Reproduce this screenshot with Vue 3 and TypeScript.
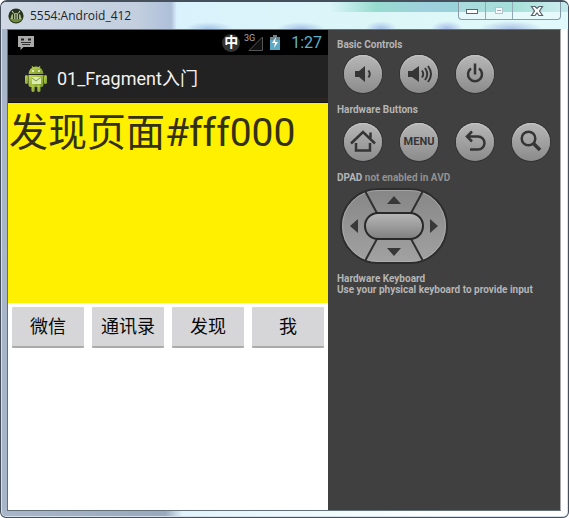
<script setup lang="ts">
import { ref } from 'vue'

interface Tab {
  label: string
  color: string
}

const tabs: Tab[] = [
  { label: '微信', color: '#ff0000' },
  { label: '通讯录', color: '#00ff00' },
  { label: '发现', color: '#fff000' },
  { label: '我', color: '#0000ff' },
]
const current = ref<number>(2)
</script>

<template>
  <div class="window">
    <header class="titlebar">
      <svg class="app-icon" viewBox="0 0 16 16" aria-hidden="true">
        <circle cx="8" cy="8" r="7.6" fill="#28351c" />
        <path d="M1.500 10h13a7 7 0 0 1-13 0z" fill="#6d8a3d" />
        <path d="M3 9a5 4 0 0 1 10 0v2H3z" fill="#a9b78f" />
        <path d="M4 3l1.500 2M12 3l-1.500 2" stroke="#dce3cf" />
        <path d="M5.500 6v5M8 6v5M10.500 6v5" stroke="#28351c" />
      </svg>
      <h1 class="caption">5554:Android_412</h1>
      <div class="window-buttons">
        <button type="button" class="win-btn" aria-label="Minimize">
          <svg width="14" height="8" viewBox="0 0 14 8"><rect x="1.500" y="2.500" width="11" height="4" fill="#fff" stroke="#5b6672" /></svg>
        </button>
        <button type="button" class="win-btn" aria-label="Maximize" disabled>
          <svg width="10" height="8" viewBox="0 0 10 8"><rect x="1.500" y=".5" width="7" height="6" fill="#f4fafc" stroke="#b4c3cb" /><path d="M3 3.500h4" stroke="#9cabb5" /></svg>
        </button>
        <button type="button" class="win-btn close" aria-label="Close">
          <svg width="14" height="12" viewBox="0 0 14 12"><path d="M1.500 1.500h3.500l2 2 2-2h3.500L9.500 6l3 4.500H9l-2-2.500-2 2.500H1.500l3-4.500z" fill="#fff" stroke="#56616d" stroke-width="1.200" /></svg>
        </button>
      </div>
    </header>

    <main class="client">
      <section class="phone">
        <div class="status">
          <svg class="message" width="18" height="16" viewBox="0 0 18 16" aria-hidden="true">
            <path d="M1 1h16v11H6.500L3.500 15v-3H1z" fill="#aaa" />
            <path d="M4 4.500h3M11 4.500h3" stroke="#222" stroke-width="2" />
            <path d="M4 7.500h10M5 9.500h8" stroke="#333" stroke-width="1.200" />
          </svg>
          <span class="ime">中</span>
          <svg class="signal" width="20" height="18" viewBox="0 0 20 18" aria-hidden="true">
            <path d="M5 16.500L18.500 3v13.500z" fill="#111" stroke="#555" />
            <text x="0" y="7" class="network">3G</text>
          </svg>
          <svg class="battery" width="10" height="15" viewBox="0 0 10 15" aria-hidden="true">
            <path d="M3 0h4v2h3v13H0V2h3z" fill="#6d858d" />
            <path d="M0 5h10v10H0z" fill="#5ba9c5" />
            <path d="M6 2L2 8h3l-1 5 4-6H5z" fill="#fff" />
          </svg>
          <time class="clock">1:27</time>
        </div>

        <div class="actionbar">
          <svg width="24" height="28" viewBox="0 0 24 28" aria-hidden="true">
            <defs>
              <linearGradient id="droid" x2="1" y2="1"><stop stop-color="#c5dc54" /><stop offset="1" stop-color="#76962a" /></linearGradient>
            </defs>
            <g fill="url(#droid)">
              <path d="M4.500 9a7.500 7.500 0 0 1 15 0z" />
              <path d="M4.500 10h15v10a2 2 0 0 1-2 2h-11a2 2 0 0 1-2-2z" />
              <rect x="1" y="10" width="3" height="9" rx="1.500" />
              <rect x="20" y="10" width="3" height="9" rx="1.500" />
              <rect x="7.500" y="20" width="3.200" height="7" rx="1.500" />
              <rect x="13.300" y="20" width="3.200" height="7" rx="1.500" />
            </g>
            <path d="M8 1l1.500 3M16 1l-1.500 3" stroke="#a9c54b" />
            <circle cx="9" cy="6" r=".9" fill="#fff" /><circle cx="15" cy="6" r=".9" fill="#fff" />
            <path d="M8 12h8l1 2v5H8z" fill="#dcebb0" />
            <path d="M8 13l4 3 4-3" fill="none" stroke="#7e993b" />
          </svg>
          <h2>01_Fragment入门</h2>
        </div>

        <div class="fragment" :style="{ backgroundColor: tabs[current].color }">{{ tabs[current].label }}页面{{ tabs[current].color }}</div>

        <nav class="tabs">
          <button v-for="(tab, i) in tabs" :key="tab.label" type="button" class="tab" @click="current = i">{{ tab.label }}</button>
        </nav>
      </section>

      <aside class="controls">
        <h3>Basic Controls</h3>
        <div class="keys basic">
          <button type="button" class="key" aria-label="Volume down">
            <svg viewBox="0 0 38 38"><path d="M11 16h4l6-5v16l-6-5h-4z" fill="#353535" /><path d="M24.500 15.500q2.500 3.500 0 7" class="line" /></svg>
          </button>
          <button type="button" class="key" aria-label="Volume up">
            <svg viewBox="0 0 38 38"><path d="M8 16h4l7-5v16l-7-5H8z" fill="#353535" /><path d="M22 15.500q2.500 3.500 0 7M25 13q4.500 6 0 12M28 11q6 8 0 16" class="line" /></svg>
          </button>
          <button type="button" class="key" aria-label="Power">
            <svg viewBox="0 0 38 38"><path d="M15 13.500a7 7 0 1 0 8 0M19 8.500v11" class="line thick" /></svg>
          </button>
        </div>

        <h3>Hardware Buttons</h3>
        <div class="keys hardware">
          <button type="button" class="key" aria-label="Home">
            <svg viewBox="0 0 38 38"><path d="M7 20.500L19 9l12 11.500M26.500 15V9.500M12 20v7.500h14V20" class="line thick" /></svg>
          </button>
          <button type="button" class="key">MENU</button>
          <button type="button" class="key" aria-label="Back">
            <svg viewBox="0 0 38 38"><path d="M16 8.500l-5 5 5 5M11 13.500h11a6.500 6.500 0 0 1 0 13h-8" class="line thick" /></svg>
          </button>
          <button type="button" class="key" aria-label="Search">
            <svg viewBox="0 0 38 38"><circle cx="16.500" cy="15.500" r="6.800" class="line thick" /><path d="M21.500 20.500l6.500 6.500" class="line heavy" /></svg>
          </button>
        </div>

        <h3>DPAD <span class="note">not enabled in AVD</span></h3>
        <svg class="dpad" width="108" height="76" viewBox="0 0 108 76" role="img" aria-label="Directional pad">
          <defs>
            <linearGradient id="pad" x2="0" y2="1"><stop stop-color="#868686" /><stop offset="1" stop-color="#a2a2a2" /></linearGradient>
            <linearGradient id="center" x2="0" y2="1"><stop stop-color="#b8b8b8" /><stop offset="1" stop-color="#808080" /></linearGradient>
          </defs>
          <rect x="1" y="1" width="106" height="74" rx="37" fill="url(#pad)" stroke="#2d2d2d" stroke-width="2" />
          <rect x="2.500" y="2.500" width="103" height="71" rx="35.500" fill="none" stroke="#b0b0b0" opacity=".7" />
          <path d="M25 3l13 24M83 3L70 27M25 73l13-24M83 73L70 49" stroke="#303030" stroke-width="2" />
          <rect x="25" y="25" width="58" height="26" rx="13" fill="url(#center)" stroke="#292929" stroke-width="2" />
          <path d="M47 16l7-8 7 8zM47 60l7 8 7-8zM18 31l-8 7 8 7zM90 31l8 7-8 7z" fill="#383838" />
        </svg>

        <h3 class="keyboard">Hardware Keyboard<br />Use your physical keyboard to provide input</h3>
      </aside>
    </main>
  </div>
</template>

<style>
body {
  margin: 0;
}
</style>

<style scoped>
.window {
  box-sizing: border-box;
  display: flex;
  flex-direction: column;
  min-height: 100vh;
  padding: 0 7px 6px 6px;
  border: 1px solid #45505c;
  border-top-width: 2px;
  border-radius: 7px 7px 6px 6px;
  background: linear-gradient(90deg, #a9b6c9 0, #9ba9be 29%, #e2f3fb 32%, #f2fbfb 60%, #fff 80%, #fff 100%);
  box-shadow: inset 0 0 0 1px #d5e0eb;
  font-family: Roboto, "Noto Sans CJK SC", sans-serif;
}

h1,
h2,
h3 {
  margin: 0;
  font-weight: 400;
}

.titlebar {
  display: flex;
  align-items: center;
  height: 27px;
  margin: 0 -7px 0 -6px;
  padding: 0 7px;
  border-radius: 5px 5px 0 0;
  background:
    radial-gradient(ellipse 24px 7px at 208px 100%, #a3c5e8 0, transparent 100%),
    radial-gradient(ellipse 24px 7px at 300px 100%, #a3c0e8 0, transparent 100%),
    radial-gradient(ellipse 16px 8px at 380px 100%, #a3c0e8 0, transparent 100%),
    radial-gradient(ellipse 16px 8px at 446px 100%, #a3b8e8 0, transparent 100%),
    radial-gradient(ellipse 32px 8px at 510px 100%, #a9bfe5 0, transparent 100%),
    linear-gradient(90deg, transparent 58%, #98dcd0 66%, #9fd0de 75%, #8fd8cf 90%, #c5e9ec 100%) 0 0 / 100% 10px no-repeat,
    linear-gradient(90deg, #cfd8e4 0, #c3cfdf 24%, #aebfd9 30%, #daf2fc 31%, #dcf6f8 65%, #e1f9fb 100%);
}

.app-icon {
  width: 16px;
  height: 16px;
}

.caption {
  flex: 1;
  margin-left: 6px;
  color: #20242a;
  font-family: "Open Sans", sans-serif;
  font-size: 12px;
  line-height: 20px;
}

.window-buttons {
  display: flex;
  align-self: flex-start;
  height: 17px;
  border: 1px solid #879ca9;
  border-top: 0;
  border-radius: 0 0 4px 4px;
  background: #ffffff30;
}

.win-btn {
  display: flex;
  align-items: center;
  justify-content: center;
  width: 27px;
  padding: 0;
  border: 0;
  border-right: 1px solid #93aab7;
  background: none;
}

.win-btn.close {
  width: 47px;
  border: 0;
}

.client {
  display: grid;
  flex: 1;
  grid-template-columns: 320fr 232fr;
  border: 1px solid #62707a;
  border-right-color: #aaa;
}

.phone {
  background: #fff;
}

.status {
  display: flex;
  align-items: center;
  height: 25px;
  padding: 0 6px 0 9px;
  background: #000;
}

.ime {
  width: 18px;
  height: 18px;
  margin-left: auto;
  border-radius: 50%;
  background: #333;
  color: #fff;
  font-size: 14px;
  font-weight: 700;
  line-height: 17px;
  text-align: center;
}

.signal {
  margin-left: 4px;
}

.network {
  fill: #aaa;
  font-size: 9px;
}

.battery {
  margin-left: 6px;
}

.clock {
  margin-left: 11px;
  color: #5fb0cc;
  font-size: 16px;
}

.actionbar {
  box-sizing: border-box;
  display: flex;
  align-items: center;
  gap: 9px;
  height: 48px;
  padding-left: 16px;
  border-bottom: 1px solid #171717;
  background: #222;
  box-shadow: inset 0 -4px #292622;
  color: #f2f2f2;
}

.actionbar h2 {
  font-size: 18px;
  line-height: 24px;
}

.fragment {
  box-sizing: border-box;
  height: 200px;
  padding: 3px 1px;
  color: #333016;
  font-size: 39px;
  line-height: 54px;
  white-space: nowrap;
}

.tabs {
  display: grid;
  grid-template-columns: repeat(4, 1fr);
  gap: 8px;
  padding: 4px;
}

.tab {
  height: 41px;
  padding: 0;
  border: 0;
  border-bottom: 2px solid #aaa;
  border-radius: 1px;
  background: #d6d6d8;
  color: #080808;
  font: 18px/40px Roboto, "Noto Sans CJK SC", sans-serif;
}

.controls {
  padding: 9px 8px 0 9px;
  background: #404040;
}

.controls h3 {
  color: #b5b5b5;
  font-size: 10px;
  font-weight: 700;
  line-height: 12px;
  white-space: nowrap;
}

.controls .note {
  color: #929292;
}

.keys {
  display: flex;
  gap: 18px;
  padding-left: 7px;
}

.basic {
  margin: 4px 0 11px;
}

.hardware {
  margin: 7px 0 11px;
}

.key {
  box-sizing: border-box;
  flex: none;
  width: 38px;
  height: 38px;
  padding: 0;
  border: 0;
  border-radius: 50%;
  background: linear-gradient(#b7b7b7, #8b8b8b);
  box-shadow: 0 0 0 1px #333, inset 0 1px 1px #c8c8c8;
  color: #353535;
  font: 700 11px/38px Roboto, sans-serif;
}

.key svg {
  display: block;
}

.line {
  fill: none;
  stroke: #353535;
  stroke-width: 2;
}

.thick {
  stroke-width: 2.500;
}

.heavy {
  stroke-width: 3.500;
}

.dpad {
  display: block;
  margin: 4px 0 9px 3px;
}

.controls .keyboard {
  line-height: 11px;
}
</style>
